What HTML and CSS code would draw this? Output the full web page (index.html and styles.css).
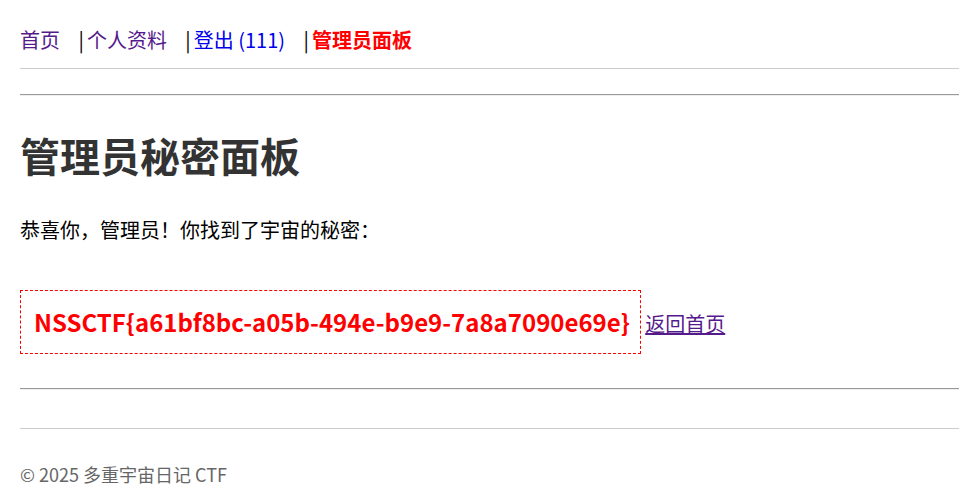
FILE: index.html
```html
<!DOCTYPE html>
<html>
<head>
    <title>管理员秘密面板</title>
    <link rel="stylesheet" href="styles.css">
</head>
<body>
    <nav class="topnav">
        <a href="#" class="visited">首页</a> |<a href="#" class="visited">个人资料</a> |<a href="#">登出 (111)</a> |<a href="#" class="admin">管理员面板</a>
    </nav>
    <hr>

    <h1>管理员秘密面板</h1>
    <p>恭喜你，管理员！你找到了宇宙的秘密：</p>

    <div class="secret">
        <span class="flag">NSSCTF{a61bf8bc-a05b-494e-b9e9-7a8a7090e69e}</span>
        <a href="#" class="visited back">返回首页</a>
    </div>
    <hr>

    <footer>
        <p>© 2025 多重宇宙日记 CTF</p>
    </footer>
</body>
</html>
```

FILE: styles.css
```css
body {
    margin: 0;
    padding: 20px 0 0 20px;
    font-family: "Noto Sans CJK SC", "Noto Sans", sans-serif;
    font-size: 20px;
    color: #000;
    background: #fff;
}

a {
    color: #0000ee;
    text-decoration: none;
}

a.visited {
    color: #551a8b;
}

.topnav {
    padding: 5px 0 14px;
    border-bottom: 1px solid #ccc;
}

.topnav a {
    margin-left: 3px;
    margin-right: 14px;
}

.topnav a:first-child {
    margin-left: 0;
}

.topnav .admin {
    color: red;
    font-weight: bold;
}

hr {
    margin: 25px 0 0;
    border: none;
    border-top: 1px solid #9a9a9a;
    border-bottom: 1px solid #eee;
}

h1 {
    font-size: 40px;
    color: #333;
    margin: 30px 0 31px;
}

.secret {
    margin: 46px 0 0;
    padding-bottom: 9px;
}

.flag {
    display: inline-block;
    padding: 13px 10px 14px 13px;
    border: 1px dashed red;
    color: red;
    font-weight: bold;
    font-size: 24px;
}

.back {
    text-decoration: underline;
}

footer {
    margin-top: 38px;
    border-top: 1px solid #ccc;
    color: #666;
    font-size: 18px;
}

footer p {
    margin: 32px 0;
}
```
